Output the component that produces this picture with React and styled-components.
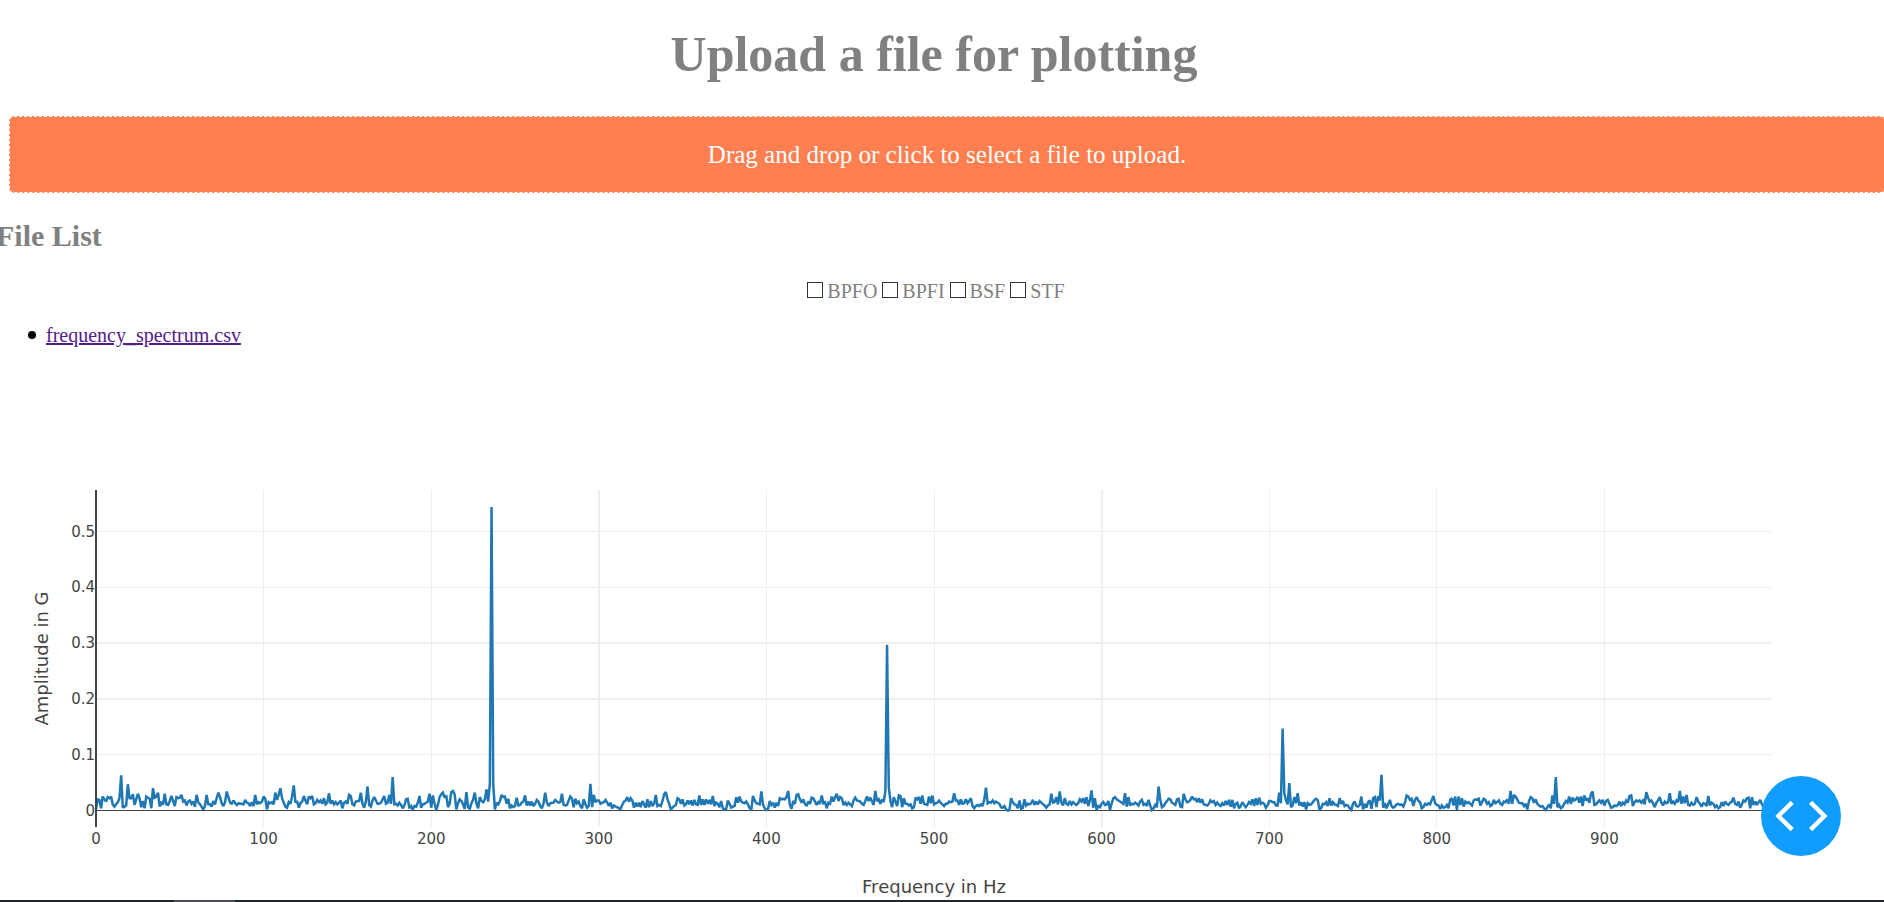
import React, { useLayoutEffect, useRef, useState } from "react";
import styled, { createGlobalStyle } from "styled-components";

const GlobalStyle = createGlobalStyle`
  *, *::before, *::after { box-sizing: border-box; }
  html, body { margin: 0; background: #fff; }
  body {
    overflow-x: hidden;
    font-family: "Liberation Serif", "Times New Roman", serif;
    font-size: 20px;
    line-height: 24px;
    color: #000;
  }
`;

const Page = styled.div`
  min-height: 100vh;
  padding: 25px 16px 2px 0;
  display: flex;
  flex-direction: column;
  overflow: hidden;
`;

const Title = styled.h1`
  margin: 0 0 33px;
  font-size: 50px;
  line-height: 58px;
  text-align: center;
  color: gray;
`;

const DropZone = styled.label`
  display: block;
  margin: 0 -17px 26px 9px;
  border: 1px dashed #fff;
  border-radius: 5px;
  background: coral;
  color: #fff;
  font-size: 25px;
  line-height: 75px;
  text-align: center;
  cursor: pointer;
`;

const HiddenFileInput = styled.input`
  position: absolute;
  width: 1px;
  height: 1px;
  opacity: 0;
  overflow: hidden;
`;

const SectionTitle = styled.h2`
  margin: 0 0 26px -4px;
  font-size: 30px;
  line-height: 34px;
  color: gray;
`;

const Checklist = styled.div`
  display: flex;
  justify-content: center;
  gap: 5px;
  margin-bottom: 20px;
  padding-left: 4px;
  color: gray;
`;

const CheckLabel = styled.label`
  display: flex;
  align-items: flex-start;
  gap: 4px;
`;

const Checkbox = styled.input`
  appearance: none;
  width: 16px;
  height: 16px;
  margin: 3px 0 0;
  border: 1px solid #333;
  background: #fff;
  &:checked { background: #333; }
`;

const FileList = styled.ul`
  margin: 0 0 18px;
  padding-left: 28px;
  list-style: none;
`;

const FileItem = styled.li`
  display: flex;
  align-items: center;
  gap: 10px;
  &::before {
    content: "";
    width: 8px;
    height: 8px;
    border-radius: 50%;
    background: #000;
  }
`;

const FileLink = styled.a`
  color: #551a8b;
  text-decoration: underline;
`;

const ChartFrame = styled.div`
  flex: 1;
  min-height: 535px;
  svg { display: block; }
`;

const TickText = styled.text`
  font-family: "DejaVu Sans", Verdana, sans-serif;
  font-size: 15px;
  fill: #444;
`;

const AxisTitle = styled(TickText)`
  font-size: 18px;
`;

const DebugButton = styled.button`
  position: fixed;
  right: 43px;
  bottom: 46px;
  width: 80px;
  height: 80px;
  padding: 0;
  border: 0;
  border-radius: 50%;
  background: #119dff;
  cursor: pointer;
  svg { display: block; }
`;

const BottomStrip = styled.div`
  position: fixed;
  left: 0;
  right: 0;
  bottom: 0;
  height: 2px;
  padding-left: 174px;
  background: #20252b;
`;

const StripThumb = styled.div`
  width: 61px;
  height: 2px;
  background: #4c5054;
`;

// Amplitude in thousandths of a G, one sample per Hz, starting at 0 Hz.
const SPECTRUM = `
2 20 19 4 25 20 16 24 22 25 11 7 11 15 22 63 5 7 9 47
22 22 29 10 20 30 22 6 17 4 25 23 21 4 40 23 25 32 7 16
10 30 11 10 17 26 17 8 24 22 23 28 16 18 9 16 18 12 16 7
28 15 11 7 2 8 28 11 11 7 17 11 22 32 24 13 8 15 34 24
14 12 18 13 10 13 12 12 11 19 14 13 8 15 8 28 11 15 13 16
25 21 2 15 13 15 11 32 19 28 40 22 14 7 5 15 12 25 45 14
17 5 13 16 26 18 11 25 22 26 11 13 19 15 18 12 22 11 14 31
12 18 11 15 11 14 18 4 14 16 12 28 26 11 9 16 17 17 32 12
5 16 43 10 7 18 24 18 12 12 14 20 26 12 14 28 12 60 11 12
9 14 10 4 9 20 21 4 8 2 8 7 14 26 5 11 12 14 16 30
5 27 12 1 10 24 29 32 23 27 6 12 33 35 29 2 13 20 17 11
3 33 6 3 13 19 32 12 4 24 17 15 20 38 16 48 544 48 2 14
11 17 28 24 25 12 21 4 9 6 8 23 9 10 14 16 27 9 16 9
16 8 12 19 16 8 4 12 32 15 8 13 14 14 19 16 14 15 30 10
9 10 18 25 21 6 21 13 16 8 4 20 11 5 8 48 6 28 15 18
18 12 14 15 19 14 8 14 4 9 7 6 4 3 10 16 18 24 16 22
18 5 14 7 14 6 17 11 5 20 6 17 8 12 28 8 10 8 17 29
33 20 12 2 5 8 10 22 20 12 20 9 11 18 11 18 9 19 11 10
27 10 20 10 20 12 19 11 26 8 14 12 6 17 4 2 3 18 12 5
7 8 24 14 25 16 14 13 16 11 4 2 26 18 13 12 11 34 10 4
1 3 17 10 14 5 14 8 22 20 21 20 24 35 10 3 17 12 28 29
20 14 20 12 8 16 12 23 22 16 10 15 12 27 13 15 4 14 12 25
16 24 30 17 24 22 10 14 10 14 11 8 18 23 18 17 16 12 10 17
25 17 23 16 10 35 17 20 12 20 15 35 297 42 18 6 24 16 8 27
26 6 22 12 12 9 11 4 6 23 20 24 12 27 12 11 10 25 13 27
11 13 14 18 14 11 8 12 12 16 15 16 31 18 18 10 20 12 13 20
13 17 22 8 4 8 10 8 11 8 20 41 13 15 14 18 13 16 14 12
6 5 8 2 0 1 22 15 11 10 4 18 3 5 20 9 12 11 13 19
10 16 11 17 14 11 9 5 9 11 30 14 15 24 11 34 14 9 22 12
10 17 11 15 12 10 13 20 16 22 12 24 8 18 36 5 22 1 8 6
12 15 10 11 17 1 13 22 24 20 18 16 14 12 31 7 24 9 12 11
14 12 9 16 19 10 12 8 19 9 1 4 10 6 43 19 6 8 13 17
21 20 14 12 10 20 21 7 6 30 20 15 16 19 25 20 21 15 22 14
20 11 10 9 12 18 15 17 10 14 10 8 13 9 17 10 19 7 19 4
12 14 4 8 15 10 6 10 15 12 20 8 22 10 23 12 14 12 5 9
17 17 15 15 9 9 32 13 147 32 18 11 49 6
9 24 13 31 9 15 7 15 2 13 10 11 15 19 21 18 2 4 12 11
15 8 22 9 15 11 10 8 22 12 17 8 10 9 4 1 12 16 8 7
10 25 2 12 5 15 18 3 22 24 6 26 18 64 5 13 4
11 19 8 5 7 11 12 10 11 7 14 27 25 19 21 8 19 24 17 15
4 6 12 10 13 11 19 26 13 10 9 3 9 5 6 10 4
19 22 9 25 1 25 10 22 7 16 13 15 12 9 18 20 19 21
9 15 21 19 12 15 8 10 19 13 15 18 12 10 16 15 20 12 35 12
28 25 20 14 13 13 8 12 2 17 24 22 14 20 12 9 7 8 4
1 6 11 4 27 12 60 6 10 4 6 12 17 14 25 12 23 18
20 24 14 25 8 27 18 22 14 30 34 10 11 15 18 14 19 9 17
19 12 5 6 9 8 10 16 8 14 11 18 14 26 27 8 15 18 16
18 14 18 11 33 23 16 18 13 6 14 18 24 14 9 16 13 15 31 12
16 12 18 15 35 12 25 13 28 10 9 14 10 12 24 16 12 7 13 12
8 26 9 14 12 6 9 4 6 15 8 16 12 10 14 16 23 12 10 16
5 11 18 16 22 23 4 24 10 16 10 15 19 11 6 8 10 12 7 5
11 14 8 16 12 9 15 18 10 7 12 14 9 16 11 8 12 15 9 10
`.trim().split(/\s+/).map(Number);

const X_TICKS = [
  { value: 0, weight: 1 }, { value: 100, weight: 1 }, { value: 200, weight: 1 },
  { value: 300, weight: 2 }, { value: 400, weight: 1 }, { value: 500, weight: 1 },
  { value: 600, weight: 2 }, { value: 700, weight: 1 }, { value: 800, weight: 1 },
  { value: 900, weight: 1 },
];
const Y_TICKS = [
  { value: 0, weight: 1 }, { value: 0.1, weight: 1 }, { value: 0.2, weight: 2 },
  { value: 0.3, weight: 2 }, { value: 0.4, weight: 1 }, { value: 0.5, weight: 1 },
];

const HEIGHT = 535;
const LEFT = 96;
const RIGHT = 96;
const TOP = 125;
const BOTTOM = 462;
const ZERO_Y = 445;
const PX_PER_G = 558;

const crisp = (n, weight) => (weight === 2 ? Math.round(n) : Math.floor(n) + 0.5);

function SpectrumChart() {
  const frame = useRef(null);
  const [width, setWidth] = useState(0);

  useLayoutEffect(() => {
    const update = () => setWidth(frame.current.clientWidth);
    update();
    const observer = new ResizeObserver(update);
    observer.observe(frame.current);
    return () => observer.disconnect();
  }, []);

  const plotWidth = Math.max(width - LEFT - RIGHT, 0);
  const x = (hz) => LEFT + (hz / 1000) * plotWidth;
  const y = (g) => ZERO_Y + 0.5 - g * PX_PER_G;
  const line = SPECTRUM.slice(0, 1000)
    .map((v, hz) => `${x(hz).toFixed(2)},${y(v / 1000).toFixed(2)}`)
    .join(" ");
  const centerY = (TOP + BOTTOM) / 2;

  return (
    <ChartFrame ref={frame}>
      {width > 0 && (
        <svg width={width} height={HEIGHT} role="img" aria-label="Frequency spectrum">
          <g stroke="#eee">
            {X_TICKS.slice(1).map(({ value, weight }) => (
              <line key={value} x1={crisp(x(value), weight)} x2={crisp(x(value), weight)} y1={TOP} y2={BOTTOM} strokeWidth={weight} />
            ))}
            {Y_TICKS.slice(1).map(({ value, weight }) => (
              <line key={value} x1={LEFT} x2={LEFT + plotWidth} y1={crisp(y(value), weight)} y2={crisp(y(value), weight)} strokeWidth={weight} />
            ))}
          </g>
          <line x1={LEFT} x2={LEFT + plotWidth} y1={ZERO_Y + 0.5} y2={ZERO_Y + 0.5} stroke="#444" />
          <polyline points={line} fill="none" stroke="#1f77b4" strokeWidth="2.5" strokeMiterlimit="2" />
          <line x1={LEFT} x2={LEFT} y1={TOP} y2={BOTTOM} stroke="#444" strokeWidth="2" />
          {X_TICKS.map(({ value }) => (
            <TickText key={value} x={x(value)} y={479} textAnchor="middle">{value}</TickText>
          ))}
          {Y_TICKS.map(({ value }) => (
            <TickText key={value} x={LEFT - 1} y={Math.round(y(value) + 5)} textAnchor="end">{value}</TickText>
          ))}
          <AxisTitle x={LEFT + plotWidth / 2} y={528} textAnchor="middle">Frequency in Hz</AxisTitle>
          <AxisTitle transform={`translate(48 ${centerY}) rotate(-90)`} textAnchor="middle">Amplitude in G</AxisTitle>
        </svg>
      )}
    </ChartFrame>
  );
}

const FAULTS = ["BPFO", "BPFI", "BSF", "STF"];

export default function App() {
  return (
    <>
      <GlobalStyle />
      <Page>
        <Title>Upload a file for plotting</Title>
        <DropZone>
          Drag and drop or click to select a file to upload.
          <HiddenFileInput type="file" />
        </DropZone>
        <SectionTitle>File List</SectionTitle>
        <Checklist>
          {FAULTS.map((name) => (
            <CheckLabel key={name}>
              <Checkbox type="checkbox" name={name} />
              {name}
            </CheckLabel>
          ))}
        </Checklist>
        <FileList>
          <FileItem><FileLink href="#frequency_spectrum.csv">frequency_spectrum.csv</FileLink></FileItem>
        </FileList>
        <SpectrumChart />
      </Page>
      <DebugButton type="button" aria-label="Toggle developer tools">
        <svg width="80" height="80" viewBox="0 0 80 80" fill="none" stroke="#fff" strokeWidth="4.4">
          <path d="M31.2 26.4 L17.4 40 L31.2 53.6" />
          <path d="M49.6 26.4 L63.4 40 L49.6 53.6" />
        </svg>
      </DebugButton>
      <BottomStrip><StripThumb /></BottomStrip>
    </>
  );
}
